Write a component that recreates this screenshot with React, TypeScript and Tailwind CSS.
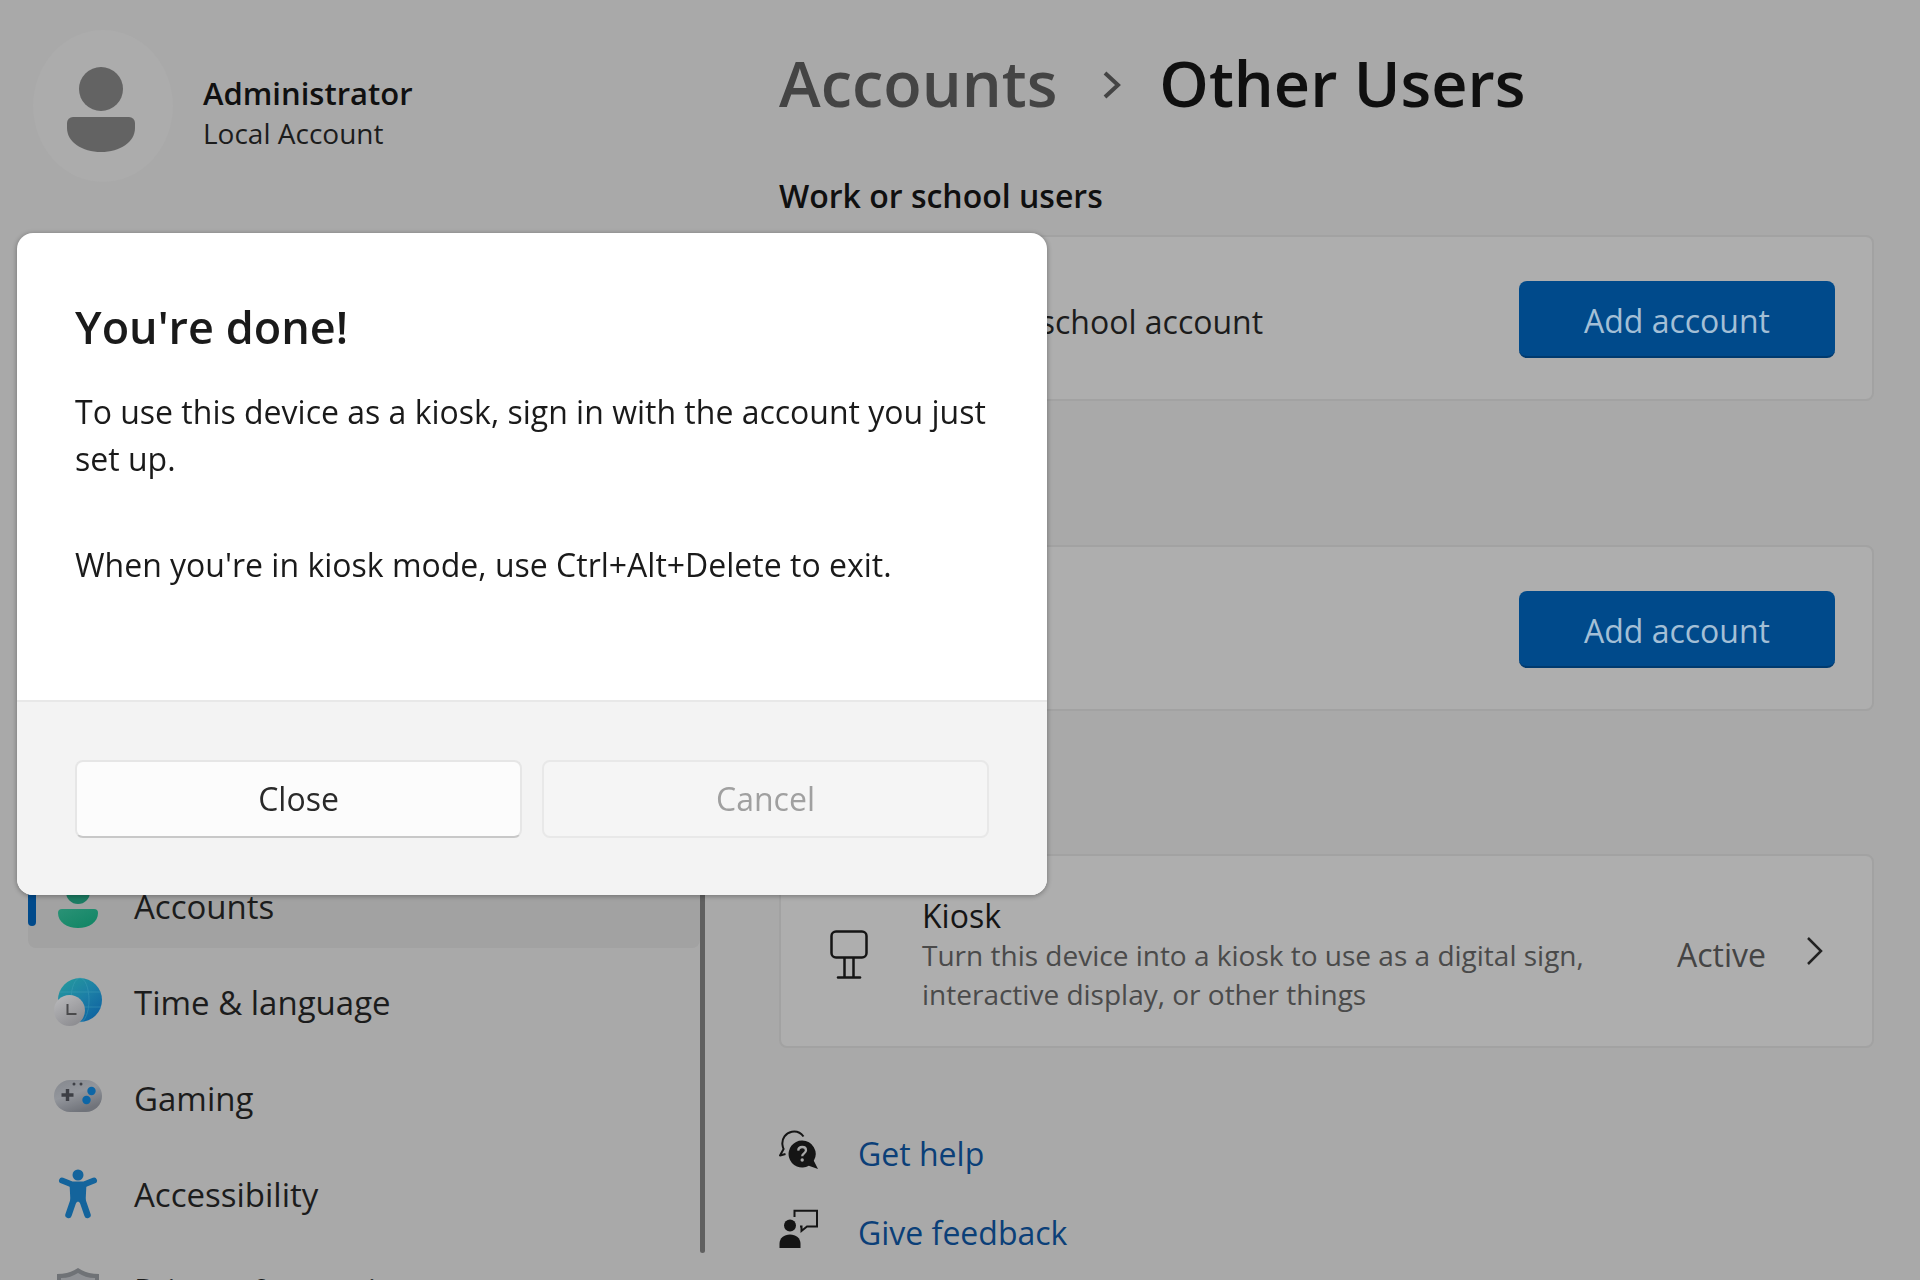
import type { ReactNode } from "react";

function AccountsIcon() {
  return (
    <svg width="48" height="50" viewBox="0 0 48 50" aria-hidden="true">
      <defs>
        <linearGradient id="acc" x1="0" y1="0" x2="1" y2="1">
          <stop offset="0" stopColor="#2a9276" />
          <stop offset="1" stopColor="#0f8463" />
        </linearGradient>
      </defs>
      <circle cx="24" cy="11" r="12" fill="#1c7c63" />
      <path d="M8 28h32a4 4 0 0 1 4 4c0 9-9 15-20 15S4 41 4 32a4 4 0 0 1 4-4Z" fill="url(#acc)" />
    </svg>
  );
}

function TimeIcon() {
  return (
    <svg width="48" height="50" viewBox="0 0 48 50" aria-hidden="true">
      <defs>
        <linearGradient id="globe" x1="0.1" y1="0" x2="0.9" y2="1">
          <stop offset="0" stopColor="#259a9c" />
          <stop offset="0.5" stopColor="#1c7fa6" />
          <stop offset="1" stopColor="#0d5fa0" />
        </linearGradient>
        <linearGradient id="clock" x1="0" y1="0" x2="0.6" y2="1">
          <stop offset="0" stopColor="#bcbcbe" />
          <stop offset="1" stopColor="#8e8e92" />
        </linearGradient>
      </defs>
      <circle cx="26" cy="23" r="22" fill="url(#globe)" />
      <g fill="none" stroke="#4aa6bd" strokeWidth="1" opacity="0.4">
        <ellipse cx="26" cy="23" rx="9" ry="22" />
        <path d="M6 15h40M5 30h42" />
      </g>
      <circle cx="15.500" cy="33.500" r="15.500" fill="url(#clock)" />
      <path d="M13.500 27v10h9" fill="none" stroke="#4a4a4c" strokeWidth="2" />
    </svg>
  );
}

function GamingIcon() {
  return (
    <svg width="48" height="50" viewBox="0 0 48 50" aria-hidden="true">
      <defs>
        <linearGradient id="pad" x1="0" y1="0" x2="0.5" y2="1">
          <stop offset="0" stopColor="#85888e" />
          <stop offset="0.5" stopColor="#93969c" />
          <stop offset="1" stopColor="#70737a" />
        </linearGradient>
      </defs>
      <rect x="0" y="7" width="48" height="32" rx="16" fill="url(#pad)" />
      <path d="M13.500 16v12M7.500 22h12" stroke="#3d3f45" strokeWidth="3.400" />
      <circle cx="20" cy="11" r="1.500" fill="#3f4147" />
      <circle cx="27" cy="11" r="1.500" fill="#3f4147" />
      <circle cx="37.500" cy="18" r="4.200" fill="#0d66a6" />
      <circle cx="32.500" cy="27" r="4.200" fill="#0d66a6" />
    </svg>
  );
}

function AccessibilityIcon() {
  return (
    <svg width="48" height="50" viewBox="0 0 48 50" aria-hidden="true">
      <circle cx="24" cy="6" r="5.500" fill="#14649c" />
      <g stroke="#14649c" strokeLinecap="round" strokeLinejoin="round" fill="none">
        <path d="M8 11.500 18 15.500H30L40 11.500" strokeWidth="6" />
        <path d="M20 30 14.500 46M28 30 33.500 46" strokeWidth="6.500" />
      </g>
      <path d="M15.500 14h17L31.500 34l-3.500 1-4-2.500-4 2.500-3.500-1Z" fill="#14649c" />
    </svg>
  );
}

function PrivacyIcon() {
  return (
    <svg width="48" height="50" viewBox="0 0 48 50" aria-hidden="true">
      <path d="M24 3c6 4 12 6 21 6v14c0 14-9 22-21 26C12 45 3 37 3 23V9c9 0 15-2 21-6Z" fill="#6f7276" />
      <path d="M24 8c5 3 10 5 17 5v10c0 12-7 18-17 22C14 41 7 35 7 23V13c7 0 12-2 17-5Z" fill="#909296" />
    </svg>
  );
}

function KioskIcon() {
  return (
    <svg width="38" height="50" viewBox="0 0 38 50" fill="none" stroke="#151515" strokeWidth="2.500" aria-hidden="true">
      <rect x="1.500" y="1.500" width="35" height="26" rx="4.500" />
      <path d="M14.500 28v19M23.500 28v19" />
      <path d="M8 47.500h22" strokeLinecap="round" />
    </svg>
  );
}

function HelpIcon() {
  return (
    <svg width="40" height="40" viewBox="0 0 40 40" fill="none" aria-hidden="true">
      <path
        d="M24.500 6.500C21.500 2.500 17 1 12.800 1.800 6.500 3 2.800 8.500 3.400 14.500c.2 1.700.6 3.200 1.200 4.500L1 25.500 6.500 24"
        stroke="#151515"
        strokeWidth="2"
        strokeLinejoin="round"
      />
      <path d="M23 10.500a13.500 13.500 0 1 0 6.800 25.200L39 39l-4.200-8.200A13.500 13.500 0 0 0 23 10.500Z" fill="#151515" />
      <path d="M19.200 20.600c.2-2.300 1.800-3.600 4-3.600s3.800 1.300 3.800 3.300c0 3-3.800 3-3.800 5.900" stroke="#a9a9a9" strokeWidth="2.300" />
      <circle cx="23.200" cy="30" r="1.700" fill="#a9a9a9" />
    </svg>
  );
}

function FeedbackIcon() {
  return (
    <svg width="40" height="40" viewBox="0 0 40 40" fill="none" aria-hidden="true">
      <path d="M15.500 8V1.800H38V17.500H28L22.500 22v-4.500H21" stroke="#151515" strokeWidth="2" />
      <circle cx="11" cy="16.500" r="6" fill="#151515" />
      <path d="M.5 39v-4C.5 29 5 25.500 11 25.500S21.500 29 21.500 35v4Z" fill="#151515" />
    </svg>
  );
}

const navItems = [
  { label: "Accounts", icon: <AccountsIcon />, active: true },
  { label: "Time & language", icon: <TimeIcon />, active: false },
  { label: "Gaming", icon: <GamingIcon />, active: false },
  { label: "Accessibility", icon: <AccessibilityIcon />, active: false },
  { label: "Privacy & security", icon: <PrivacyIcon />, active: false },
];

function Sidebar() {
  return (
    <aside className="flex w-[705px] shrink-0 pt-[30px]">
      <div className="flex min-w-0 flex-1 flex-col">
        <div className="flex h-[152px] items-center gap-[30px] pl-[33px]">
          <svg width="140" height="152" viewBox="0 0 140 152" aria-hidden="true">
            <ellipse cx="70" cy="76" rx="70" ry="76" fill="#acacac" />
            <circle cx="68" cy="59" r="22" fill="#636363" />
            <path d="M40 87h56a6 6 0 0 1 6 6v5c0 14-15 24-34 24S34 112 34 98v-5a6 6 0 0 1 6-6Z" fill="#636363" />
          </svg>
          <div className="flex flex-col pt-[14px]">
            <span className="text-[31px] leading-10 font-semibold text-[#101010]">Administrator</span>
            <span className="text-[28px] leading-10 text-[#1c1c1c]">Local Account</span>
          </div>
        </div>
        <nav className="mt-[682px] flex flex-col gap-3 pl-7">
          {navItems.map((item) => (
            <a
              key={item.label}
              href="#"
              className={
                item.active
                  ? "relative flex h-[84px] shrink-0 items-center gap-8 rounded-lg bg-[#a2a2a2] pl-[26px]"
                  : "relative flex h-[84px] shrink-0 items-center gap-8 rounded-lg pl-[26px]"
              }
            >
              {item.active && <span className="absolute top-6 left-0 h-[38px] w-2 rounded-full bg-[#004a8b]" />}
              {item.icon}
              <span className="pt-[2px] text-[33px] leading-10 whitespace-nowrap text-[#1c1c1c]">{item.label}</span>
            </a>
          ))}
        </nav>
      </div>
      <div className="mt-[220px] h-[1003px] w-[5px] rounded-full bg-[#606060]" />
    </aside>
  );
}

function Card({ children }: { children: ReactNode }) {
  return (
    <div className="flex items-center rounded-lg border-2 border-[#a2a2a2] bg-[#aeaeae] pr-[37px]">{children}</div>
  );
}

function AddButton() {
  return (
    <button
      type="button"
      className="mt-11 mb-[41px] ml-auto h-[77px] w-[316px] rounded-lg border-b-2 border-[#003a6e] bg-[#004a8b] pt-1 text-[32px] leading-10 text-[#a3bfd6]"
    >
      Add account
    </button>
  );
}

function Main() {
  return (
    <main className="flex min-w-0 flex-1 flex-col pt-[43px] pr-[46px] pl-[74px]">
      <h1 className="flex items-center text-[63px] leading-[80px] font-semibold whitespace-nowrap">
        <a href="#" className="text-[#444444]">
          Accounts
        </a>
        <svg className="mt-1 mr-[38px] ml-[46px]" width="18" height="28" viewBox="0 0 18 28" fill="none" aria-hidden="true">
          <path d="m2 2 13 12L2 26" stroke="#444444" strokeWidth="4" />
        </svg>
        <span className="text-[#101010]">Other Users</span>
      </h1>

      <section className="mt-[53px]">
        <h2 className="mb-[19px] text-[32px] leading-10 font-semibold text-[#101010]">Work or school users</h2>
        <Card>
          <span className="pt-2 pl-[42px] text-[32px] leading-10 whitespace-nowrap text-[#1c1c1c]">
            Add a work or school account
          </span>
          <AddButton />
        </Card>
      </section>

      <section className="mt-36" aria-label="Other users">
        <Card>
          <AddButton />
        </Card>
      </section>

      <section className="mt-[143px]" aria-label="Kiosk">
        <Card>
          <div className="flex items-center gap-[54px] pt-10 pb-8 pl-[49px]">
            <KioskIcon />
            <div>
              <div className="text-[32px] leading-10 text-[#151515]">Kiosk</div>
              <p className="max-w-[720px] text-[28px] leading-[39px] text-[#4a4a4a]">
                Turn this device into a kiosk to use as a digital sign, interactive display, or other things
              </p>
            </div>
          </div>
          <button type="button" className="ml-auto flex items-center gap-10 pr-3 text-[32px] leading-10 text-[#444444]">
            <span className="pt-2">Active</span>
            <svg width="17" height="28" viewBox="0 0 17 28" fill="none" aria-hidden="true">
              <path d="m2 1 13 13L2 27" stroke="#222222" strokeWidth="2.500" />
            </svg>
          </button>
        </Card>
      </section>

      <div className="mt-[82px] flex flex-col gap-[35px] text-[32px] leading-10 text-[#0b3f78]">
        <a href="#" className="flex items-start gap-[39px]">
          <HelpIcon />
          <span className="pt-1">Get help</span>
        </a>
        <a href="#" className="flex items-start gap-[39px]">
          <FeedbackIcon />
          <span className="pt-1">Give feedback</span>
        </a>
      </div>
    </main>
  );
}

function DoneDialog() {
  return (
    <div
      role="dialog"
      aria-modal="true"
      aria-labelledby="done-title"
      className="fixed top-[233px] left-[17px] flex w-[1030px] max-w-full flex-col overflow-hidden rounded-2xl bg-white shadow-[0_1px_4px_1px_rgba(0,0,0,0.25)]"
    >
      <div className="flex flex-col px-[58px] pt-[62px] pb-[112px] text-[32px] leading-[47px] text-[#1a1a1a]">
        <h2 id="done-title" className="text-[45px] leading-[64px] font-semibold">
          You're done!
        </h2>
        <p className="mt-[29px]">To use this device as a kiosk, sign in with the account you just set up.</p>
        <p className="mt-[59px]">When you're in kiosk mode, use Ctrl+Alt+Delete to exit.</p>
      </div>
      <div className="flex gap-5 border-t-2 border-[#e8e8e8] bg-[#f3f3f3] px-[58px] pt-[58px] pb-[57px] text-[32px]">
        <button
          type="button"
          className="h-[78px] flex-1 rounded-lg border-2 border-[#e6e6e6] border-b-[#c8c8c8] bg-[#fcfcfc] text-[#2a2a2a]"
        >
          Close
        </button>
        <button
          type="button"
          disabled
          className="h-[78px] flex-1 rounded-lg border-2 border-[#e8e8e8] bg-[#f5f5f5] text-[#a0a0a0]"
        >
          Cancel
        </button>
      </div>
    </div>
  );
}

export default function App() {
  return (
    <div className="flex h-screen overflow-hidden bg-[#a9a9a9] font-['Open_Sans','Noto_Sans',sans-serif]">
      <Sidebar />
      <Main />
      <DoneDialog />
    </div>
  );
}
